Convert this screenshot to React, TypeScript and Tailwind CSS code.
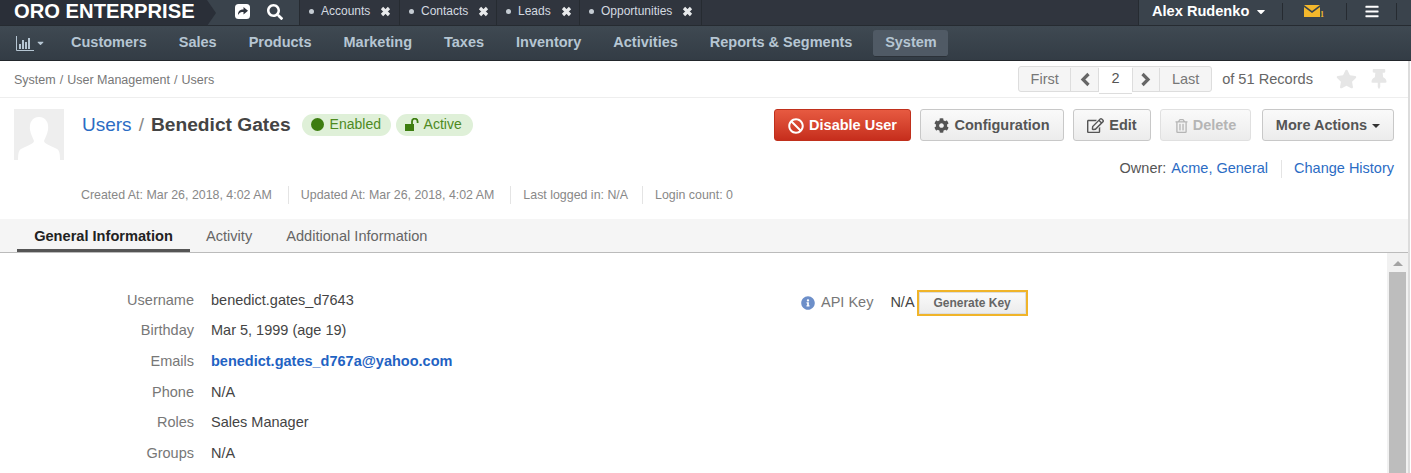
import React from "react";
import {
  FaBan,
  FaBars,
  FaCaretDown,
  FaCog,
  FaInfoCircle,
  FaRegEdit,
  FaRegTrashAlt,
  FaSearch,
  FaStar,
  FaThumbtack,
} from "react-icons/fa";

const pinned = [
  { label: "Accounts", width: "w-[100px]" },
  { label: "Contacts", width: "w-[97px]" },
  { label: "Leads", width: "w-[83px]" },
  { label: "Opportunities", width: "w-[122px]" },
];

const menu = ["Customers", "Sales", "Products", "Marketing", "Taxes", "Inventory", "Activities", "Reports & Segments"];

const meta = [
  { text: "Created At: Mar 26, 2018, 4:02 AM", cls: "pr-[16px]" },
  { text: "Updated At: Mar 26, 2018, 4:02 AM", cls: "border-l border-[#e4e4e4] pr-[16px] pl-[12px]" },
  { text: "Last logged in: N/A", cls: "border-l border-[#e4e4e4] pr-[14px] pl-[12px]" },
  { text: "Login count: 0", cls: "border-l border-[#e4e4e4] pl-[12px]" },
];

const fields: [string, string][] = [
  ["Username", "benedict.gates_d7643"],
  ["Birthday", "Mar 5, 1999 (age 19)"],
  ["Emails", "benedict.gates_d767a@yahoo.com"],
  ["Phone", "N/A"],
  ["Roles", "Sales Manager"],
  ["Groups", "N/A"],
];

function CloseIcon() {
  return (
    <svg width="11" height="11" viewBox="0 0 11 11" className="ml-[10px] shrink-0">
      <path d="M2 2l7 7M9 2l-7 7" stroke="#e8eaec" strokeWidth="3.2" />
    </svg>
  );
}

function Chevron({ left }: { left?: boolean }) {
  return (
    <svg width="12" height="15" viewBox="0 0 12 15">
      <path d={left ? "M9.5 2L4 7.500l5.500 5.500" : "M2.500 2L8 7.500 2.500 13"} fill="none" stroke="#666666" strokeWidth="3.2" />
    </svg>
  );
}

function TopBar() {
  return (
    <div className="flex h-[26px] border-b border-[#262b31] bg-[#30353e] text-white">
      {/* Logo with arrow */}
      <div className="relative flex w-[207px] items-center bg-[#2a2f38] pb-[3px] pl-[14px] text-[20.2px] font-bold leading-none">
        ORO ENTERPRISE
        <div className="absolute top-0 left-full h-0 w-0 border-y-[13px] border-l-[9px] border-y-transparent border-l-[#2a2f38]" />
      </div>
      <div className="flex w-[92px] items-center bg-[#3a434c] pb-[2px] pl-[28px]">
        <svg width="15" height="15" viewBox="0 0 15 15">
          <rect width="15" height="15" rx="3.500" fill="#ffffff" />
          <path d="M3 11c0-4 2-5.500 5.500-5.500V3L13 6.800 8.500 10.500V8C6 8 4.500 8.500 3 11z" fill="#30353e" />
        </svg>
        <FaSearch className="ml-[17px] h-[16px] w-[16px]" />
      </div>
      {/* Pinned pages */}
      {pinned.map((p) => (
        <div key={p.label} className={`flex items-center border-l border-[#262b31] pb-[3px] pl-[9px] ${p.width}`}>
          <span className="h-[5px] w-[5px] rounded-full bg-[#c5ccd3]" />
          <span className="ml-[7px] text-[12px] text-[#d4dae0]">{p.label}</span>
          <CloseIcon />
        </div>
      ))}
      <div className="w-[437px] border-l border-[#262b31]" />
      {/* User menu */}
      <div className="flex flex-1 items-center border-l border-[#262b31] bg-[#3a434c] pb-[2px] pl-[13px]">
        <span className="text-[14.6px] font-bold">Alex Rudenko</span>
        <FaCaretDown className="ml-[6px] h-[13px] w-[12px]" />
        <div className="ml-[15px] h-[17px] w-px bg-[#262b31]" />
        <div className="flex w-[63px] items-center justify-center">
          <svg width="21" height="13" viewBox="0 0 21 13">
            <path d="M0 0h16L8 6z" fill="#f4b82c" />
            <path d="M0 2l8 6 8-6v10H0z" fill="#f4b82c" />
            <text x="16" y="12" fontSize="8" fontFamily="Liberation Serif" fontWeight="bold" fill="#f4b82c">1</text>
          </svg>
        </div>
        <div className="h-[17px] w-px bg-[#262b31]" />
        <div className="flex w-[49px] items-center justify-center">
          <FaBars className="h-[15px] w-[14px]" />
        </div>
        <div className="h-[17px] w-px bg-[#262b31]" />
      </div>
    </div>
  );
}

function MainNav() {
  return (
    <div className="flex h-[35px] items-center border-b border-[#22262b] bg-gradient-to-b from-[#3f4952] to-[#333c45] text-[14.5px] font-bold text-[#b6c6d3]">
      <div className="ml-[16px] flex w-[55px] items-center">
        <svg width="18" height="15" viewBox="0 0 18 15">
          <path d="M.5 0v14.500H18" fill="none" stroke="#b6c6d3" />
          <path d="M3 8h2v5H3zM6 4h2v9H6zM9 6h2v7H9zM12 2h2v11h-2z" fill="#b6c6d3" />
        </svg>
        <FaCaretDown className="ml-[2px] h-[10px] w-[9px]" />
      </div>
      <div className="flex gap-[32px]">
        {menu.map((m) => (
          <span key={m}>{m}</span>
        ))}
      </div>
      <div className="ml-[21px] flex h-[27px] w-[75px] items-center justify-center rounded-[3px] border-b border-[#2b3138] bg-[#505a65] pt-[1px]">
        System
      </div>
    </div>
  );
}

function Breadcrumbs() {
  return (
    <div className="flex h-[37px] items-center border-b border-[#eeeeee] pl-[14px]">
      <span className="flex gap-[4px] pt-[3px] text-[12.5px] text-[#777777]">
        <span>System</span>/<span>User Management</span>/<span>Users</span>
      </span>
      <div className="ml-auto flex h-full items-center pr-[21px]">
        <div className="flex h-[26px] items-center rounded-[3px] border border-[#dddddd] bg-[#f5f5f5] pt-[1px] text-[14.5px] text-[#777777]">
          <span className="flex h-full w-[52px] items-center justify-center border-r border-[#dddddd]">First</span>
          <span className="flex h-full w-[28px] items-center justify-center border-r border-[#dddddd]">
            <Chevron left />
          </span>
          <span className="z-10 -mb-[1px] flex h-[27px] w-[33px] items-center justify-center border-b border-[#dddddd] bg-white pb-[1px] text-[#555555]">2</span>
          <span className="flex h-full w-[28px] items-center justify-center border-x border-[#dddddd]">
            <Chevron />
          </span>
          <span className="flex h-full w-[51px] items-center justify-center">Last</span>
        </div>
        <span className="ml-[10px] pt-[1px] text-[14.6px] text-[#666666]">of 51 Records</span>
        <FaStar className="ml-[23px] h-[20px] w-[21px] text-[#e6e6e6]" />
        <FaThumbtack className="ml-[14px] h-[20px] w-[16px] text-[#e6e6e6]" />
      </div>
    </div>
  );
}

function ActionButton({ icon, label, width, muted, trailing }: { icon?: React.ReactNode; label: string; width: string; muted?: boolean; trailing?: React.ReactNode }) {
  return (
    <button
      className={`flex h-[32px] items-center justify-center gap-[5px] rounded-[3px] border bg-gradient-to-b from-[#fafafa] to-[#ececec] pt-[1px] text-[14.5px] font-bold ${width} ${
        muted ? "border-[#e0e0e0] text-[#b5b5b5]" : "border-[#c8c8c8] text-[#555555]"
      }`}
    >
      {icon}
      {label}
      {trailing}
    </button>
  );
}

function UnlockIcon() {
  return (
    <svg width="15" height="13" viewBox="0 0 15 13" className="shrink-0">
      <rect x="0" y="6" width="9" height="7" fill="#3d7d10" />
      <path d="M7 6V3.500a2.800 2.800 0 0 1 5.600 0V5" fill="none" stroke="#3d7d10" strokeWidth="1.800" />
    </svg>
  );
}

function PageHeader() {
  return (
    <div className="flex h-[121px] flex-col pt-[11px]">
      <div className="flex">
        {/* Avatar placeholder */}
        <div className="ml-[14px] h-[51px] w-[50px] bg-[#eeeeee]">
          <svg width="50" height="51" viewBox="0 0 50 51">
            <path d="M25 8c7 0 10 6 9 13-1 5-3 8-4 11 0 3 8 5 13 8 2 1 3 4 3 11H4c0-7 1-10 3-11 5-3 13-5 13-8-1-3-3-6-4-11-1-7 2-13 9-13z" fill="#ffffff" />
          </svg>
        </div>
        <div className="ml-[18px] flex h-[32px] items-center">
          <span className="text-[19px] text-[#2b6cc4]">Users</span>
          <span className="ml-[7px] text-[19px] text-[#888888]">/</span>
          <span className="ml-[7px] text-[19.2px] font-bold text-[#444444]">Benedict Gates</span>
          <span className="ml-[11px] flex h-[22px] w-[89px] items-center rounded-full bg-[#dff0d8] pb-[1px] pl-[9px] text-[14px] text-[#4e8a1f]">
            <span className="h-[13px] w-[13px] rounded-full bg-[#3d7d10]" />
            <span className="ml-[6px]">Enabled</span>
          </span>
          <span className="ml-[5px] flex h-[22px] w-[77px] items-center rounded-full bg-[#dff0d8] pb-[1px] pl-[9px] text-[14px] text-[#4e8a1f]">
            <UnlockIcon />
            <span className="ml-[4px]">Active</span>
          </span>
        </div>
        <div className="mr-[14px] ml-auto flex flex-col items-end">
          <div className="flex">
            <button className="flex h-[32px] w-[137px] items-center justify-center gap-[5px] rounded-[3px] border border-[#c0301c] bg-gradient-to-b from-[#e75a41] to-[#c62d1c] pt-[1px] text-[14.5px] font-bold text-white">
              <FaBan className="h-[16px] w-[16px]" />
              Disable User
            </button>
            <div className="ml-[9px]"><ActionButton width="w-[144px]" icon={<FaCog className="h-[15px] w-[15px]" />} label="Configuration" /></div>
            <div className="ml-[9px]"><ActionButton width="w-[78px]" icon={<FaRegEdit className="h-[17px] w-[17px]" />} label="Edit" /></div>
            <div className="ml-[9px]"><ActionButton muted width="w-[91px]" icon={<FaRegTrashAlt className="h-[14px] w-[13px]" />} label="Delete" /></div>
            <div className="ml-[11px]">
              <ActionButton width="w-[132px]" label="More Actions" trailing={<span className="h-0 w-0 border-x-[4px] border-t-[4px] border-x-transparent border-t-[#333333]" />} />
            </div>
          </div>
          <div className="mt-[17px] flex h-[22px] items-center text-[14.5px]">
            <span className="text-[#555555]">Owner:</span>
            <span className="ml-[5px] text-[#2b6cc4]">Acme, General</span>
            <span className="mr-[12px] ml-[13px] h-[18px] w-px bg-[#e4e4e4]" />
            <span className="text-[#2b6cc4]">Change History</span>
          </div>
        </div>
      </div>
      {/* Created / updated line */}
      <div className="mt-[7px] ml-[81px] flex h-[16px] items-center text-[12.4px] text-[#888888]">
        {meta.map((m) => (
          <span key={m.text} className={m.cls}>{m.text}</span>
        ))}
      </div>
    </div>
  );
}

function Tabs() {
  return (
    <div className="flex h-[34px] items-end border-b border-[#bbbbbb] bg-[#f5f5f5] pl-[17px] text-[14.6px] text-[#666666]">
      <div className="flex h-[33px] w-[173px] items-center justify-center border-b-[3px] border-[#555555] pt-[5px] font-bold text-[#222222]">
        General Information
      </div>
      <div className="flex h-[33px] items-center pt-[3px] pl-[16px]">Activity</div>
      <div className="flex h-[33px] items-center pt-[3px] pl-[34px]">Additional Information</div>
    </div>
  );
}

function Details() {
  return (
    <div className="flex min-h-0 flex-1">
      <div className="flex flex-1 pt-[32.3px] text-[14.5px]">
        <div className="w-[801px]">
          {fields.map(([label, value]) => (
            <div key={label} className="flex h-[30.67px] items-center">
              <span className="w-[194px] text-right text-[#777777]">{label}</span>
              <span className={`ml-[17px] ${label === "Emails" ? "font-bold text-[#1f63c3]" : "text-[#444444]"}`}>{value}</span>
            </div>
          ))}
        </div>
        <div className="mt-[2px] flex h-[30.67px] items-center">
          <FaInfoCircle className="h-[14px] w-[14px] text-[#6d8fc9]" />
          <span className="ml-[6px] text-[#777777]">API Key</span>
          <span className="ml-[17px] text-[#444444]">N/A</span>
          <div className="ml-[2px] border-2 border-[#f0b429]">
            <button className="flex h-[22px] w-[107px] items-center justify-center border border-[#dddddd] bg-gradient-to-b from-[#fafafa] to-[#ececec] text-[12px] font-bold text-[#666666]">
              Generate Key
            </button>
          </div>
        </div>
      </div>
      {/* Scrollbar */}
      <div className="flex w-[21px] flex-col items-center bg-[#f1f1f1]">
        <div className="mt-[8px] h-0 w-0 border-x-[5px] border-b-[5px] border-x-transparent border-b-[#a3a3a3]" />
        <div className="mt-[6px] w-[17px] flex-1 bg-[#bdbdbd]" />
      </div>
    </div>
  );
}

export default function App() {
  return (
    <div className="flex h-[473px] w-[1411px] flex-col overflow-hidden bg-white font-['Liberation_Sans',sans-serif]">
      <TopBar />
      <MainNav />
      <div className="mr-[1px] flex min-h-0 flex-1 flex-col border-r-2 border-[#dcdcdc]">
        <Breadcrumbs />
        <PageHeader />
        <Tabs />
        <Details />
      </div>
    </div>
  );
}
